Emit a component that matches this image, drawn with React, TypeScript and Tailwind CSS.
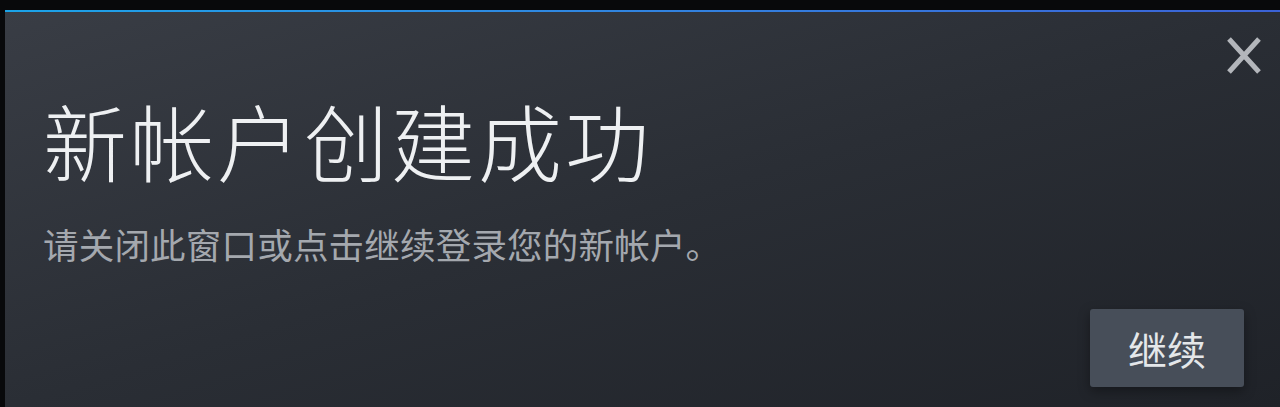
export default function App() {
  return (
    <div className="h-[407px] w-[1280px] overflow-hidden bg-[#08090b] pl-[5px] pt-[10px] font-['Noto_Sans_CJK_SC','Noto_Sans',sans-serif]">
      <div className="relative flex h-full flex-col bg-gradient-to-br from-[#393d45] via-[#2a2e35] to-[#1f2228]">
        <div className="h-[2px] bg-gradient-to-r from-[#1aa3e8] to-[#3b62d6]" />
        <button className="absolute right-[18px] top-[27px] flex h-[37px] w-[36px] items-center justify-center text-[#b3b6bb]">
          <svg viewBox="0 0 36 37" className="h-[37px] w-[36px]" fill="none" stroke="currentColor" strokeWidth="5" strokeLinecap="butt">
            <path d="M3 2 L33 35 M33 2 L3 35" />
          </svg>
        </button>
        <div className="flex flex-1 flex-col pl-[38px] pr-[36px] pb-[20px] pt-[86px]">
          <h1 className="text-[84px] font-light leading-none tracking-[3px] text-[#eef0f2]">新帐户创建成功</h1>
          <p className="mt-[44px] text-[35.5px] leading-none tracking-[0.2px] text-[#a4a8ae]">请关闭此窗口或点击继续登录您的新帐户。</p>
          <div className="mt-auto flex justify-end">
            <button className="h-[78px] w-[154px] rounded-[3px] bg-[#474e59] text-[39px] leading-none text-[#e4e7ea] shadow-[0_4px_12px_rgba(0,0,0,0.35)]">
              继续
            </button>
          </div>
        </div>
      </div>
    </div>
  );
}
